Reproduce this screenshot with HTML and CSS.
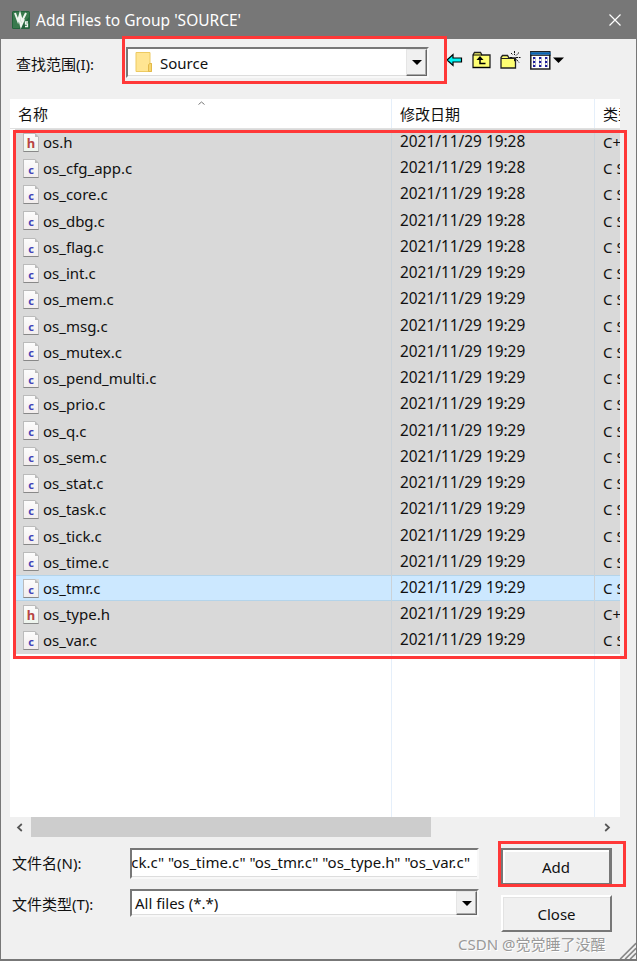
FILE: index.html
```html
<!DOCTYPE html>
<html lang="zh-CN">
<head>
  <meta charset="UTF-8" />
  <title>Add Files to Group 'SOURCE'</title>
  <link rel="stylesheet" href="styles.css">
</head>
<body>
  <div class="dialog">
    <div class="titlebar">
      <svg class="logo" width="18" height="18" viewBox="0 0 18 18">
        <rect width="18" height="18" rx="1.5" fill="#23633b"/>
        <path d="M1 1h16v5L7 17H1z" fill="#39794d"/>
        <path d="M3 2l3 8 2-7 2 7 4-8M7 7l2 8 3-7" fill="none" stroke="#eef5ee" stroke-width="2"/>
        <path d="M16 11h-2.500v2h2v2.500H13" fill="none" stroke="#eef5ee" stroke-width="1.300"/>
      </svg>
      <span class="title">Add Files to Group 'SOURCE'</span>
      <svg class="close" width="14" height="14" viewBox="0 0 14 14"><path d="M1.500 1.500l11 11M12.500 1.500l-11 11" stroke="#fff" stroke-width="1.200"/></svg>
    </div>

    <div class="lookin">
      <label>查找范围(I):</label>
      <div class="field combo source">
        <svg class="folder" width="18" height="21" viewBox="0 0 18 21">
          <path d="M1 .5h14v11h1.500v8H1z" fill="#ffe592" stroke="#edca62"/>
          <path d="M13.500 19.500v-6.500l1-1.500h2v8z" fill="#f6d66e" stroke="#e3b94a"/>
        </svg>
        <span class="text">Source</span>
        <span class="drop"></span>
      </div>
      <div class="tools">
        <svg width="17" height="14" viewBox="0 0 17 14"><path d="M1 7l6-5.500V5h8.500v4H7v3.500z" fill="#00f3f3" stroke="#000" stroke-width="1.200"/></svg>
        <svg width="19" height="18" viewBox="0 0 19 18">
          <path d="M1 16.500V4l1.500-2.500h6L10 4h8v12.500z" fill="#ffff72" stroke="#222" stroke-width="1.300"/>
          <path d="M1 4h9M1 16.500h17" stroke="#000"/>
          <path d="M13.500 12.500H8V6.500" fill="none" stroke="#000" stroke-width="1.500"/>
          <path d="M4.500 9L8 5l3.500 4z"/>
        </svg>
        <svg width="21" height="20" viewBox="0 0 21 20">
          <path d="M1 18V7.500L2.500 5.500h5L9 8h6.500v10z" fill="#ffff72" stroke="#222" stroke-width="1.300"/>
          <path d="M1 8.500h14" stroke="#222"/>
          <path d="M14.500 1v4M11 3l2 2M19 2.500l-3 3M16 7.500h4.500M10 7.500h3M16.500 9.500l2.500 3M14.500 9v3" stroke="#111" stroke-dasharray="2 .8"/>
        </svg>
        <svg width="34" height="19" viewBox="0 0 34 19">
          <path d="M.8.8h19v17.200H.8z" fill="#fff" stroke="#222" stroke-width="1.500"/>
          <path d="M.5 2.500h20" stroke="#0864b4" stroke-width="2.500"/>
          <path d="M.5 4.300h20" stroke="#111"/>
          <path d="M3 7h3M9 7h3M15 7h3M3 11h3M9 11h3M15 11h3M3 15h3M9 15h3M15 15h3" stroke="#1c1c99" stroke-width="2" stroke-dasharray="2 .6"/>
          <path d="M3 9h4M9 9h4M15 9h4M3 13h4M9 13h4M15 13h4" stroke="#777" stroke-dasharray="1 1"/>
          <path d="M23 6.500h11l-5.500 5.500z"/>
        </svg>
      </div>
    </div>

    <div class="list">
      <div class="head">
        <div>名称<svg class="sort" width="7" height="4" viewBox="0 0 7 4"><path d="M.5 3.500l3-2.500 3 2.500" fill="none" stroke="#777"/></svg></div>
        <div>修改日期</div>
        <div>类型</div>
      </div>
      <div class="rows" id="rows"></div>
    </div>

    <div class="scroll">
      <svg width="7" height="9" viewBox="0 0 7 9"><path d="M5.800 1L2 4.500 5.800 8" fill="none" stroke="#555" stroke-width="1.700"/></svg>
      <div class="thumb"></div>
      <svg width="7" height="9" viewBox="0 0 7 9"><path d="M1.200 1L5 4.500 1.200 8" fill="none" stroke="#555" stroke-width="1.700"/></svg>
    </div>

    <div class="bottom">
      <div class="inputs">
        <div class="line">
          <label>文件名(N):</label>
          <div class="field filename"><span class="names"><i>i</i>ck.c" "os_time.c" "os_tmr.c" "os_type.h" "os_var.c"</span></div>
        </div>
        <div class="line">
          <label>文件类型(T):</label>
          <div class="field combo filetype">
            <span class="text">All files (*.*)</span>
            <span class="drop"></span>
          </div>
        </div>
      </div>
      <div class="buttons">
        <button class="add">Add</button>
        <button>Close</button>
      </div>
    </div>

    <svg class="grip" width="17" height="17" viewBox="0 0 17 17">
      <path d="M1 17L17 1M6 17L17 6M11 17l6-6" stroke="#888" stroke-width="2"/>
      <path d="M-.5 17L17-.5M4.500 17L17 4.500M9.500 17L17 9.500" stroke="#fff"/>
    </svg>
    <div class="mark mark-folder"></div>
    <div class="mark mark-files"></div>
    <div class="mark mark-add"></div>
    <div class="watermark">CSDN @觉觉睡了没醒</div>
  </div>

  <script>
    const files = ["os.h", "os_cfg_app.c", "os_core.c", "os_dbg.c", "os_flag.c",
                   "os_int.c", "os_mem.c", "os_msg.c", "os_mutex.c", "os_pend_multi.c",
                   "os_prio.c", "os_q.c", "os_sem.c", "os_stat.c", "os_task.c",
                   "os_tick.c", "os_time.c", "os_tmr.c", "os_type.h", "os_var.c"];
    const rows = document.getElementById("rows");

    files.forEach((name, i) => {
      const ext = name.split(".").pop();
      const row = document.createElement("div");
      row.className = name === "os_tmr.c" ? "row current" : "row";
      row.innerHTML = `
        <div class="name"><span class="file ${ext}">${ext}</span>${name}</div>
        <div>2021/11/29 19:${i < 5 ? 28 : 29}</div>
        <div>${ext === "h" ? "C++ Header" : "C Source"}</div>`;
      rows.appendChild(row);
    });
  </script>
</body>
</html>
```
FILE: styles.css
```css
* {
  box-sizing: border-box;
}
body {
  margin: 0;
  font-family: "Noto Sans", "Noto Sans CJK SC", sans-serif;
  font-size: 15px;
  color: #111;
}
svg {
  display: block;
  flex: none;
}
.dialog {
  position: relative;
  width: 637px;
  height: 961px;
  background: #f0f0f0;
  border: 1px solid #777;
  border-bottom-width: 2px;
  overflow: hidden;
  white-space: nowrap;
}
.titlebar {
  display: flex;
  align-items: center;
  height: 38px;
  padding: 0 14px 0 11px;
  background: #777;
  color: #fff;
}
.title {
  flex: 1;
  margin-left: 6px;
  font-size: 15.5px;
}
.lookin {
  display: flex;
  height: 60px;
  padding-left: 15px;
}
.lookin label {
  width: 110px;
  padding-top: 14px;
}
.field {
  background: #fff;
  border: 2px solid;
  border-color: #777 #f8f8f8 #f8f8f8 #777;
  box-shadow: inset 0 -1px #ddd;
}
.combo {
  display: flex;
  align-items: center;
}
.combo .text {
  flex: 1;
}
.source {
  width: 303px;
  height: 31px;
  margin-top: 8px;
  padding-left: 7px;
}
.source .text {
  margin-left: 7px;
}
.drop {
  display: flex;
  align-items: center;
  justify-content: center;
  width: 21px;
  height: 100%;
  background: #f0f0f0;
  border: 1px solid;
  border-color: #e5e5e5 #666 #666 #e5e5e5;
  box-shadow: inset -1px -1px #aaa;
}
.drop::before {
  content: "";
  border: 5px solid transparent;
  border-top-color: #000;
  border-bottom: 0;
}
.tools {
  display: flex;
  align-items: center;
  height: 20px;
  margin: 11px 0 0 17px;
  gap: 9px;
}
.list {
  width: 610px;
  height: 718px;
  margin-left: 9px;
  overflow: hidden;
  background: linear-gradient(#e5effa, #e5effa) 381px 0 / 1px 100% no-repeat,
              linear-gradient(#e5effa, #e5effa) 584px 0 / 1px 100% no-repeat, #fff;
}
.head, .row {
  display: grid;
  grid-template-columns: 382px 203px 100px;
}
.head {
  height: 30px;
  line-height: 31px;
  border-bottom: 1px solid #e0e0e0;
}
.head > div {
  position: relative;
  padding-left: 8px;
}
.sort {
  position: absolute;
  left: 188px;
  top: 2px;
}
.row {
  height: 26.24px;
  line-height: 26.24px;
  margin-left: 5px;
  grid-template-columns: 377px 203px 100px;
  background: #d9d9d9;
}
.row > div {
  padding-left: 8px;
  border-right: 1px solid #cbd2d8;
}
.row > div:nth-child(2) {
  font-size: 15.4px;
}
.row.current {
  background: #cce8ff;
  box-shadow: inset 0 1px #b4d4ea, inset 0 -1px #b4d4ea;
}
.row .name {
  display: flex;
  align-items: center;
  gap: 4px;
}
.file {
  position: relative;
  width: 16px;
  height: 19px;
  background: linear-gradient(#fcfcfc, #f2eded);
  border: 1px solid #bbb;
  border-bottom-color: #888;
  color: #4545b8;
  font: bold 11px/19px "Noto Sans", sans-serif;
  text-align: center;
}
.file.h {
  background: linear-gradient(#fcfcfc, #edf4ed);
  color: #b84545;
  font-size: 13px;
}
.file::after {
  content: "";
  position: absolute;
  right: -1px;
  top: -1px;
  border: 2px solid;
  border-color: #d9d9d9 #d9d9d9 #bbb #bbb;
}
.scroll {
  display: flex;
  align-items: center;
  width: 610px;
  height: 20px;
  margin-left: 9px;
  padding: 0 9px 0 6px;
}
.thumb {
  width: 400px;
  height: 20px;
  margin: 0 auto 0 8px;
  background: #cdcdcd;
}
.bottom {
  display: flex;
  gap: 22px;
  padding: 11px 0 0 11px;
}
.line {
  display: flex;
  height: 41px;
}
.line label {
  width: 118px;
  padding-top: 4px;
}
.filename {
  display: flex;
  justify-content: flex-end;
  width: 349px;
  height: 31px;
  padding: 1px 7px 0 2px;
  overflow: hidden;
}
.names {
  font-size: 15px;
  line-height: 23px;
}
.names i {
  color: #8ac6ef;
  font-style: normal;
}
.filetype {
  width: 349px;
  height: 28px;
  padding-left: 3px;
}
.buttons {
  display: flex;
  flex-direction: column;
  gap: 10px;
}
.buttons button {
  width: 111px;
  height: 37px;
  padding: 0;
  background: #f0f0f0;
  border: 2px solid;
  border-color: #fff #777 #777 #fff;
  box-shadow: inset 1px 1px #e3e3e3;
  font: inherit;
  color: #111;
}
.buttons .add {
  border-color: #777;
  border-right-width: 3px;
  box-shadow: inset 2px 2px #fff;
}
.grip {
  position: absolute;
  right: 0;
  bottom: 0;
}
.mark {
  position: absolute;
  border: 3px solid #ff3838;
}
.mark-folder {
  left: 121px;
  top: 35px;
  width: 325px;
  height: 48px;
}
.mark-files {
  left: 12px;
  top: 129px;
  width: 614px;
  height: 529px;
}
.mark-add {
  left: 497px;
  top: 840px;
  width: 128px;
  height: 46px;
}
.watermark {
  position: absolute;
  left: 457px;
  top: 932px;
  font-size: 15px;
  line-height: 22px;
  color: #999;
  text-shadow: 1px 1px #fff;
}
```
